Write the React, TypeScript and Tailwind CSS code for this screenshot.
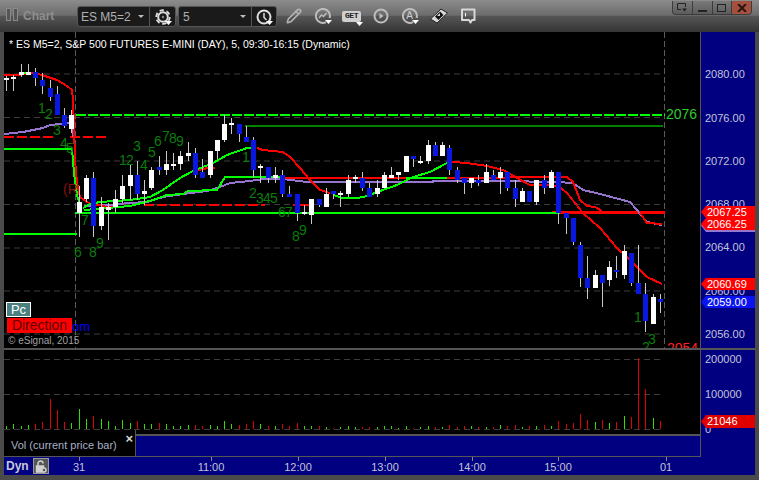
import React from "react";
import { Pencil } from "lucide-react";

type C = [number, number, number, number, number, "w" | "b"];
// x, wick top, wick bottom, body top, body bottom, colour
const candles: C[] = [
  [6,76,91,78,80,"w"],[13,75,91,77,79,"w"],[21,64,77,72,75,"w"],[28,64,75,72,75,"w"],[35,68,86,72,78,"b"],[42,73,94,80,86,"b"],[50,80,101,88,97,"b"],[57,86,115,94,115,"b"],[64,108,128,115,126,"b"],[71,110,133,115,129,"w"],
  [79,186,237,202,213,"w"],[86,175,202,178,199,"w"],[93,172,237,178,226,"b"],[101,197,230,207,226,"w"],[108,203,240,207,210,"w"],[115,190,213,199,207,"w"],[122,175,203,186,199,"w"],[130,165,200,175,186,"w"],[137,161,200,175,194,"b"],[144,180,205,191,194,"w"],
  [151,167,190,170,188,"w"],[159,156,175,167,170,"b"],[166,151,175,164,170,"w"],[173,153,170,164,166,"w"],[180,151,170,156,164,"w"],[188,142,161,153,156,"w"],[195,148,178,153,175,"b"],[202,159,178,172,178,"b"],[210,151,178,151,175,"w"],[217,140,159,140,151,"w"],
  [224,115,142,124,140,"w"],[231,118,134,123,125,"w"],[239,124,142,124,134,"b"],[246,126,142,137,142,"b"],[253,137,178,140,170,"b"],[260,164,183,166,168,"w"],[268,167,183,167,178,"b"],[275,167,183,175,178,"w"],[282,170,197,175,194,"b"],[289,186,197,194,197,"b"],
  [297,194,221,194,213,"b"],[304,205,215,212,214,"w"],[311,199,224,199,215,"w"],[319,199,207,199,205,"b"],[326,188,207,194,207,"w"],[333,191,199,191,194,"b"],[340,191,207,193,195,"w"],[348,175,197,180,194,"w"],[355,175,183,177,179,"w"],[362,172,191,178,188,"b"],
  [369,183,197,188,197,"b"],[377,180,197,188,194,"w"],[384,172,188,175,188,"w"],[391,167,178,175,178,"w"],[398,172,180,172,175,"w"],[406,156,172,156,172,"w"],[413,156,167,156,159,"b"],[420,156,164,161,163,"w"],[428,140,164,145,161,"w"],[435,142,156,145,156,"b"],
  [442,142,156,145,156,"w"],[449,145,175,148,170,"b"],[457,167,183,170,180,"b"],[464,178,194,178,183,"b"],[471,178,188,178,183,"w"],[478,175,186,180,183,"b"],[486,164,183,172,183,"w"],[493,170,180,175,180,"b"],[500,167,194,172,178,"w"],[507,172,191,172,188,"b"],
  [515,180,207,188,199,"b"],[522,188,202,191,202,"w"],[529,191,202,191,202,"b"],[536,180,205,180,202,"w"],[544,175,194,180,188,"b"],[551,170,188,172,188,"w"],[558,172,224,172,213,"b"],[566,213,234,213,218,"b"],[573,218,245,218,242,"b"],[580,242,287,245,278,"b"],
  [587,256,299,278,288,"b"],[595,270,288,275,288,"w"],[602,275,307,275,283,"b"],[609,261,286,267,280,"w"],[616,256,278,270,272,"b"],[624,245,279,251,275,"w"],[631,253,286,253,283,"b"],[638,245,294,283,294,"b"],[645,283,332,294,321,"b"],[653,294,324,297,324,"w"],[660,294,313,299,302,"b"],
];

const digits: [string, number, number][] = [
  ["1",42,113],["2",49,119],["3",57,135],["4",64,148],["5",70,153],["7",85,225],["6",78,257],["8",93,257],["9",100,248],
  ["1",123,165],["2",130,165],["3",137,151],["4",144,170],["5",152,157],["6",158,146],["7",166,141],["8",173,143],["9",180,146],
  ["1",246,162],["2",253,198],["3",260,203],["4",267,203],["5",274,203],["6",282,217],["7",289,217],["8",296,241],["9",303,235],
  ["1",638,322],["2",646,352],["3",652,344],
];

const lines: [string, string][] = [
  ["#9575cd","4,134 23,132 43,128 50,125 70,123 72,126 74,140"],
  ["#9575cd","84,206 107,205 130,203 147,202 163,197 183,194 207,191 220,187 230,183 250,181 263,179 283,179 307,182 340,182 433,182 433,181 500,181 557,182 573,183 583,190 600,194 630,202 647,222 662,225"],
  ["#ff0000","4,75 17,75 33,73 42,75 57,80 67,86 72,90 73,100 74,127 75,160 77,183 80,197 90,204 100,205 107,207 120,207"],
  ["#ff0000","198,170 208,168 215,168"],
  ["#ff0000","257,148 263,150 273,151 283,152 290,157 300,168 310,180 320,190 330,193"],
  ["#ff0000","283,178 406,178"],
  ["#ff0000","452,162 467,163 487,166 503,170 517,178 530,185 550,185 558,186"],
  ["#ff0000","447,178 567,177 573,182 580,200 587,206 595,207 602,211"],
  ["#ff0000","557,185 567,193 583,213 600,228 617,248 627,257 637,267 647,277 662,284"],
  ["#ff0000","640,213 647,223 662,224"],
  ["#33ff00","23,73 30,73"],
  ["#00ff00","4,149 72,149 74,173 77,195 80,205"],
  ["#00ff00","83,208 90,204 100,202 130,200 150,197 163,190 180,178 193,171 213,163 227,155 247,148 252,148"],
  ["#00ff00","84,210 130,206 153,200 167,195 183,194 188,191 217,190 225,177 283,177"],
  ["#00ff00","333,195 343,198 358,198 367,196 380,191 397,185 413,177 430,172 447,163"],
  ["#00ff00","406,178 447,178"],
  ["#00ff00","4,234 77,234"],
  ["#00ff00","75,213 560,213"],
];

const vols: [number, number, "r" | "g"][] = [
  [6,426,"g"],[13,424,"g"],[21,426,"g"],[28,425,"g"],[35,424,"r"],[42,422,"r"],[50,399,"r"],[57,410,"r"],[64,422,"r"],[71,423,"g"],[79,409,"g"],[86,419,"g"],[93,416,"r"],[101,419,"g"],[108,421,"g"],[115,426,"g"],[122,420,"g"],[130,423,"g"],[137,421,"r"],[144,424,"g"],[151,424,"g"],[159,423,"r"],[166,424,"g"],[173,426,"g"],[180,426,"g"],[188,425,"g"],
  [195,425,"r"],[202,426,"r"],[210,425,"g"],[217,426,"g"],[224,421,"g"],[231,424,"g"],[239,425,"r"],[246,424,"r"],[253,421,"r"],[260,424,"g"],[268,426,"r"],[275,426,"g"],[282,424,"r"],[289,426,"r"],[297,423,"r"],[304,426,"g"],[311,426,"g"],[319,426,"r"],[326,427,"g"],[333,428,"r"],[340,427,"g"],[348,426,"g"],[355,427,"g"],[362,427,"r"],[369,427,"r"],[377,427,"g"],
  [384,426,"g"],[391,426,"g"],[398,428,"g"],[406,426,"g"],[413,428,"r"],[420,427,"g"],[428,426,"g"],[435,427,"r"],[442,427,"g"],[449,425,"r"],[457,427,"r"],[464,426,"r"],[471,426,"g"],[478,427,"r"],[486,427,"g"],[493,427,"r"],[500,425,"g"],[507,426,"r"],[515,425,"r"],[522,427,"g"],[529,426,"r"],[536,426,"g"],[544,425,"r"],[551,426,"g"],[558,421,"r"],
  [566,424,"r"],[573,423,"r"],[580,414,"r"],[587,420,"r"],[595,422,"g"],[602,420,"r"],[609,423,"g"],[616,422,"r"],[624,416,"g"],[631,417,"r"],[638,358,"r"],[645,389,"r"],[653,418,"g"],[660,421,"r"],
];

const grid = [74, 117.5, 161, 204.5, 248, 291, 334];
const priceLabels: [string, number][] = [["2080.00",74],["2076.00",118],["2072.00",161],["2068.00",204],["2064.00",247],["2060.00",291],["2056.00",334]];
const times: [string, number][] = [["31",79],["11:00",211],["12:00",298],["13:00",385],["14:00",472],["15:00",558],["01",666]];

function Price({ text, y }: { text: string; y: number }) {
  return <div className="absolute left-[4px] h-[14px] leading-[14px] text-[11px] text-[#c4c4d8]" style={{ top: y - 7 }}>{text}</div>;
}

function Tag({ text, top, h = 12, cls }: { text: string; top: number; h?: number; cls: string }) {
  return (
    <div className={`absolute left-0 w-[54px] pl-[6px] text-[11px] text-white [clip-path:polygon(5px_0,100%_0,100%_100%,5px_100%,0_50%)] ${cls}`} style={{ top, height: h, lineHeight: `${h}px` }}>
      {text}
    </div>
  );
}

function Caret() {
  return <svg width="7" height="4" viewBox="0 0 7 4" className="absolute right-[-1px] bottom-[0px]"><path d="M0 0h7L3.500 4z" fill="#fff" /></svg>;
}

function IconCell({ children }: { children: React.ReactNode }) {
  return <div className="relative w-[29px] h-[20px] flex items-center justify-center shrink-0">{children}</div>;
}

export default function App() {
  return (
    <div className="w-[759px] h-[480px] overflow-hidden bg-[#4a4a4a] flex flex-col font-['Liberation_Sans',Arial,sans-serif]">
      {/* title bar */}
      <header className="h-[32px] shrink-0 relative flex items-start pt-[6px] bg-[linear-gradient(to_bottom,#8c8c8c_0%,#6c6c6c_48%,#565656_50%,#343434_100%)]">
        <div className="flex gap-[2px] ml-[6px] mt-[2px]">
          <div className="w-[5px] h-[13px] border border-[#8a8a8a] bg-[#555]" />
          <div className="w-[5px] h-[13px] border border-[#8a8a8a] bg-[#555]" />
        </div>
        <span className="ml-[5px] w-[54px] text-[12px] font-bold leading-[20px] text-[#8e8e8e]">Chart</span>

        <div className="w-[99px] h-[21px] flex items-center bg-[#1a1a1a] border border-[#555] rounded-[3px]">
          <span className="w-[71px] pl-[3px] text-[12px] text-[#b0b0b0] relative">
            ES M5=2
            <svg width="6" height="3" viewBox="0 0 6 3" className="absolute right-[5px] top-[7px]"><path d="M0 0h6L3 3z" fill="#bbb" /></svg>
          </span>
          <div className="w-px h-full bg-[#555]" />
          <div className="flex-1 flex justify-center">
            <div className="relative w-[16px] h-[16px]">
              <svg width="16" height="16" viewBox="0 0 16 16" fill="none" stroke="#ddd">
                <circle cx="8" cy="8" r="4.800" strokeWidth="2" />
                <circle cx="8" cy="8" r="6.800" strokeWidth="1.800" strokeDasharray="4.300 2.800" />
                <circle cx="8" cy="8" r="1.200" fill="#888" stroke="none" />
              </svg>
              <Caret />
            </div>
          </div>
        </div>

        <div className="ml-[2px] w-[99px] h-[21px] flex items-center bg-[#1a1a1a] border border-[#555] rounded-[3px]">
          <span className="w-[72px] pl-[4px] text-[12px] text-[#b0b0b0] relative">
            5
            <svg width="6" height="3" viewBox="0 0 6 3" className="absolute right-[5px] top-[7px]"><path d="M0 0h6L3 3z" fill="#bbb" /></svg>
          </span>
          <div className="w-px h-full bg-[#555]" />
          <div className="flex-1 flex justify-center">
            <div className="relative w-[16px] h-[16px]">
              <svg width="16" height="16" viewBox="0 0 16 16" fill="none" stroke="#ddd" strokeWidth="2">
                <circle cx="8" cy="8" r="6.500" />
                <path d="M8 4v4.500l2.500 2.500" strokeWidth="1.500" />
              </svg>
              <Caret />
            </div>
          </div>
        </div>

        <div className="ml-[2px] flex items-center">
          <IconCell><Pencil size={16} color="#b4b4b4" strokeWidth={2.400} /></IconCell>
          <IconCell>
            <div className="relative w-[16px] h-[16px]">
              <svg width="16" height="16" viewBox="0 0 16 16" fill="none" stroke="#bdbdbd" strokeWidth="2">
                <path d="M11 14.200A7 7 0 1 1 14.600 10" />
                <path d="M4 10l2.500-3 2 1.500L11.500 5" strokeWidth="1.500" />
              </svg>
              <Caret />
            </div>
          </IconCell>
          <IconCell>
            <div className="relative">
              <div className="w-[19px] h-[11px] rounded-[2px] bg-[#d0d0d0] flex items-center justify-center text-[8px] leading-none font-bold text-[#222] font-['Liberation_Mono',monospace] tracking-[-0.5px]">GET</div>
              <svg width="7" height="4" viewBox="0 0 7 4" className="absolute right-[-2px] bottom-[-4px]"><path d="M0 0h7L3.500 4z" fill="#fff" /></svg>
            </div>
          </IconCell>
          <IconCell>
            <svg width="16" height="16" viewBox="0 0 16 16" fill="none" stroke="#bdbdbd" strokeWidth="2">
              <circle cx="8" cy="8" r="6.500" />
              <path d="M6.500 5l4 3-4 3z" fill="#bdbdbd" stroke="none" />
            </svg>
          </IconCell>
          <IconCell>
            <div className="relative w-[16px] h-[16px]">
              <svg width="16" height="16" viewBox="0 0 16 16" fill="none" stroke="#bdbdbd" strokeWidth="2">
                <path d="M11 14.200A7 7 0 1 1 14.600 10" />
              </svg>
              <span className="absolute inset-0 flex items-center justify-center text-[10px] leading-none text-[#cfcfcf]">A</span>
              <Caret />
            </div>
          </IconCell>
          <IconCell>
            <svg width="18" height="16" viewBox="0 0 18 16">
              <path d="M0.500 11L11 1 17.500 5 7 15z" fill="#d8d8d8" stroke="#222" strokeWidth="1" />
              <path d="M5 8.500l5-5 3.500 3.500-5 5z" fill="#111" />
              <path d="M7 8l3-3v3z" fill="#d8d8d8" />
            </svg>
          </IconCell>
          <IconCell>
            <svg width="16" height="16" viewBox="0 0 16 16" fill="none" stroke="#d8d8d8" strokeWidth="2">
              <path d="M2 1.500h12.500v10.500h-2.500l-1.500 2.500-1.500-2.500H2z" strokeLinejoin="round" />
              <path d="M5.500 5v3.500" strokeWidth="1" stroke="#fff" />
            </svg>
          </IconCell>
        </div>

        {/* window buttons */}
        <div className="absolute right-[7px] top-[1px] w-[80px] h-[14px] flex rounded-b-[4px] border border-[#3c3c3c] border-t-0 overflow-hidden divide-x divide-[#3c3c3c] bg-[linear-gradient(to_bottom,#7a7a7a,#5c5c5c)]">
          <div className="flex-1 flex items-center justify-center">
            <svg width="10" height="9" viewBox="0 0 10 9" fill="none" stroke="#222"><path d="M8.500 4V.500h-8v6H4" /><path d="M5 5.500h5L7.500 8.500z" fill="#222" stroke="none" /></svg>
          </div>
          <div className="flex-1 flex items-end justify-center pb-[2px]"><div className="w-[9px] h-[2px] bg-[#222]" /></div>
          <div className="flex-1 flex items-center justify-center"><div className="w-[9px] h-[8px] border border-[#222]" /></div>
          <div className="flex-1 flex items-center justify-center bg-[#a4503e]">
            <svg width="10" height="8" viewBox="0 0 10 8" stroke="#2a1410" strokeWidth="2"><path d="M1 0l8 8M9 0L1 8" /></svg>
          </div>
        </div>
      </header>

      <div className="flex-1 mx-[4px] mb-[5px] flex flex-col bg-[#000080]">
        {/* price row */}
        <div className="h-[316px] flex shrink-0">
          <div className="w-[696px] relative bg-black overflow-hidden">
            <svg width="696" height="316" viewBox="4 32 696 316" className="block">
              {grid.map((y) => <line key={y} x1="4" x2="664" y1={y} y2={y} stroke="#3c3c3c" strokeDasharray="6 4" />)}
              <line x1="75.500" x2="75.500" y1="32" y2="348" stroke="#5a5a5a" strokeDasharray="6 3" />
              <line x1="664.500" x2="664.500" y1="32" y2="348" stroke="#5a5a5a" strokeDasharray="6 3" />

              <line x1="76" x2="665" y1="115" y2="115" stroke="#00ff00" strokeWidth="2" strokeDasharray="10 2" shapeRendering="crispEdges" />
              <line x1="245" x2="663" y1="126" y2="126" stroke="#008000" strokeWidth="2" shapeRendering="crispEdges" />
              <line x1="4" x2="54" y1="137" y2="137" stroke="#ff0000" strokeWidth="2" strokeDasharray="10 3" shapeRendering="crispEdges" />
              <line x1="70" x2="109" y1="137" y2="137" stroke="#ff0000" strokeWidth="2" strokeDasharray="10 3" shapeRendering="crispEdges" />
              <line x1="144" x2="265" y1="205" y2="205" stroke="#ff0000" strokeWidth="2" strokeDasharray="10 3" shapeRendering="crispEdges" />
              <line x1="293" x2="311" y1="205" y2="205" stroke="#ff0000" strokeWidth="2" shapeRendering="crispEdges" />
              <line x1="552" x2="665" y1="212.500" y2="212.500" stroke="#ff0000" strokeWidth="3" shapeRendering="crispEdges" />

              {lines.map(([c, p], i) => <polyline key={i} points={p} fill="none" stroke={c} strokeWidth="2" shapeRendering="crispEdges" />)}

              {candles.map(([x, t, b, bt, bb, k], i) => (
                <g key={i} shapeRendering="crispEdges">
                  <line x1={x + 0.5} x2={x + 0.5} y1={t} y2={b} stroke="#c8c8c8" />
                  <rect x={x - 2} y={bt} width="5" height={Math.max(bb - bt, 2)} fill={k === "w" ? "#ffffff" : "#0818e0"} />
                </g>
              ))}

              {digits.map(([d, x, y], i) => <text key={i} x={x} y={y} textAnchor="middle" fontSize="14" fill="#0b7d0b">{d}</text>)}
              <text x="63" y="194" fontSize="14" fill="#8a1010">(R</text>
              <text x="666" y="119" fontSize="14" fill="#2ecc2e">2076</text>
              <text x="667" y="353" fontSize="14" fill="#ff2020">2054</text>
            </svg>
            <div className="absolute left-[2px] bottom-[1px] w-[90px] flex flex-col items-start">
              <div className="w-[25px] h-[15px] border border-white bg-[#4b8080] text-white text-[13px] leading-[13px] text-center">Pc</div>
              <div className="mt-px flex items-end">
                <div className="ml-px w-[65px] h-[15px] bg-[#ff0000] text-[#5c0000] text-[14px] leading-[15px] text-center">Direction</div>
                <span className="text-[13px] leading-[13px] text-[#0000ff]">om</span>
              </div>
              <div className="ml-[2px] mt-[1px] text-[10px] leading-[13px] text-[#a0a0a0] whitespace-nowrap">© eSignal, 2015</div>
            </div>
            <div className="absolute left-[5px] top-[6px] text-[10.500px] leading-[13px] text-white whitespace-nowrap">* ES M5=2, S&amp;P 500 FUTURES E-MINI (DAY), 5, 09:30-16:15 (Dynamic)</div>
          </div>
          <div className="flex-1 relative border-l border-[#555]">
            {priceLabels.map(([t, y]) => <Price key={t} text={t} y={y - 32} />)}
            <Tag text="" top={187} h={13} cls="bg-[#9575cd]" />
            <Tag text="2067.25" top={174} cls="bg-[#ff0000]" />
            <Tag text="2066.25" top={186} cls="bg-[#ff0000]" />
            <Tag text="2060.69" top={246} cls="bg-[#ff0000]" />
            <Tag text="2059.00" top={264} cls="bg-[#0a14f0]" />
          </div>
        </div>

        <div className="h-[2px] bg-[#555] shrink-0" />

        {/* volume row */}
        <div className="h-[106px] flex shrink-0">
          <div className="w-[696px] flex flex-col">
            <div className="h-[84px] bg-black relative">
              <svg width="696" height="84" viewBox="4 350 696 84" className="block">
                {[359.500, 394.500].map((y) => <line key={y} x1="4" x2="664" y1={y} y2={y} stroke="#3c3c3c" strokeDasharray="6 4" />)}
                <line x1="4" x2="664" y1="429.500" y2="429.500" stroke="#3c3c3c" strokeDasharray="6 4" />
                {vols.map(([x, t, k], i) => (
                  <line key={i} x1={x + 0.5} x2={x + 0.5} y1={t} y2="429" stroke={k === "r" ? "#e00000" : "#33dd00"} shapeRendering="crispEdges" />
                ))}
              </svg>
            </div>
            <div className="h-[22px] flex border-t-2 border-[#555]">
              <div className="w-[132px] h-[26px] -mt-[6px] relative bg-black border-r border-[#555] flex items-center">
                <span className="ml-[7px] mt-[4px] text-[11px] text-[#a8b0c8] whitespace-nowrap">Vol (current price bar)</span>
                <span className="absolute right-[2px] top-[1px] text-[13px] font-bold leading-[16px] text-[#d8d8d8]">×</span>
              </div>
            </div>
          </div>
          <div className="flex-1 relative border-l border-[#555]">
            <Price text="200000" y={9} />
            <Price text="100000" y={44} />
            <Price text="0" y={79} />
            <Tag text="21046" top={65} h={13} cls="bg-[#e00000]" />
          </div>
        </div>

        <div className="h-px w-[697px] bg-[#555] shrink-0" />

        {/* time axis */}
        <div className="flex-1 relative flex items-center text-[#c4c4d8]">
          <span className="ml-[2px] text-[12px] font-bold text-[#c8c8d8]">Dyn</span>
          <div className="ml-[4px] w-[16px] h-[16px] border border-[#999] bg-[#555] flex items-center justify-center">
            <svg width="12" height="13" viewBox="0 0 12 13" fill="none" stroke="#d0d0d0" strokeWidth="1.500">
              <path d="M3 6V3.500a2.500 2.500 0 0 1 5 0" />
              <rect x="1.500" y="6" width="7" height="6" fill="#d0d0d0" />
              <circle cx="9" cy="10" r="2" fill="#555" />
            </svg>
          </div>
          {times.map(([t, x]) => (
            <React.Fragment key={t}>
              <div className="absolute top-0 w-px h-[4px] bg-[#888]" style={{ left: x - 4 }} />
              <span className="absolute top-[4px] -translate-x-1/2 text-[11px] leading-[13px]" style={{ left: x - 4 }}>{t}</span>
            </React.Fragment>
          ))}
        </div>
      </div>
    </div>
  );
}
